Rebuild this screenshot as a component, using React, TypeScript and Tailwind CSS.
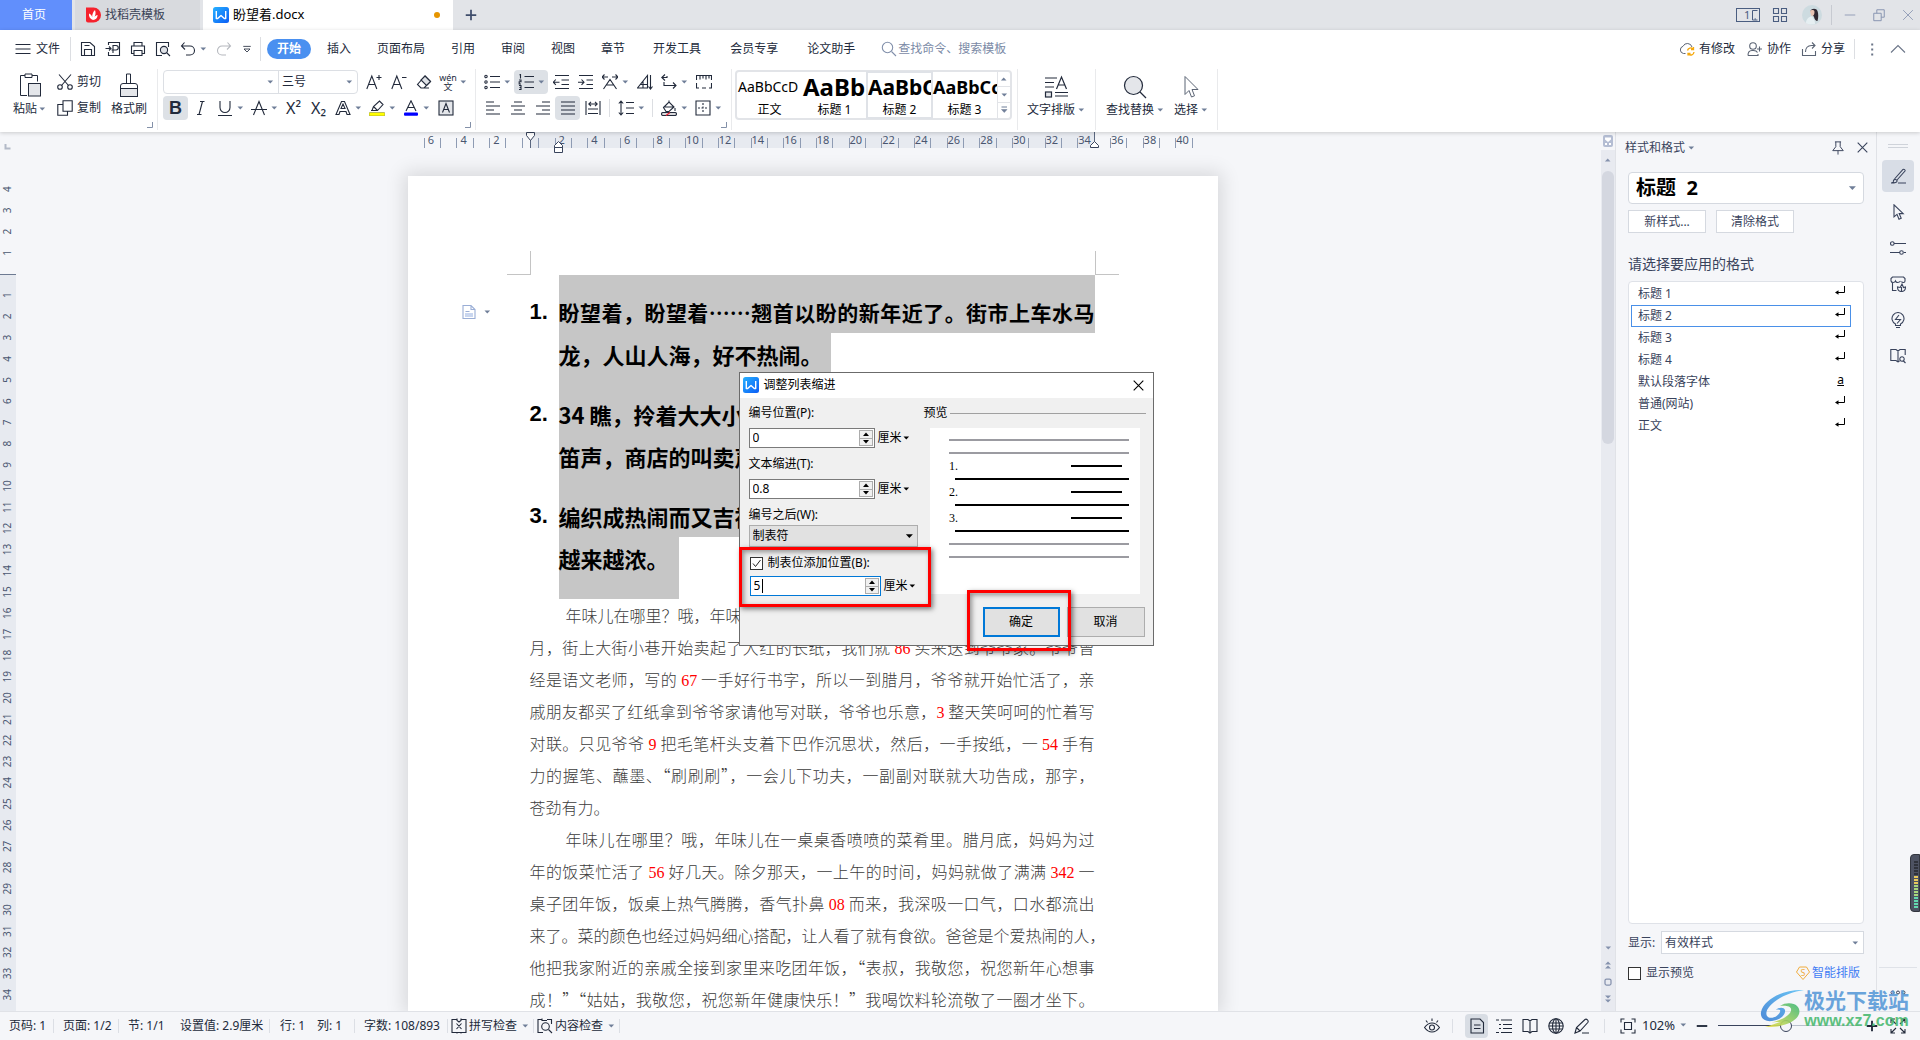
import type { ReactNode } from 'react';
import clsx from 'clsx';

interface IconProps {
  d?: string;
  className?: string;
  children?: ReactNode;
}

const Icon = ({ d, className = 'w-4 h-4', children }: IconProps) => (
  <svg viewBox="0 0 16 16" fill="none" stroke="currentColor" strokeWidth="1.1" className={clsx('shrink-0', className)} aria-hidden="true">
    {d && <path d={d} />}
    {children}
  </svg>
);

const Caret = ({ className = 'w-2 h-2 text-[#6f7e98]' }: { className?: string }) => (
  <svg viewBox="0 0 8 8" className={clsx('shrink-0', className)} aria-hidden="true">
    <path d="M1.5 2.5h5.6L4.3 5.6z" fill="currentColor" />
  </svg>
);

const WpsLogo = ({ className }: { className?: string }) => (
  <svg viewBox="0 0 16 16" className={clsx('shrink-0', className)} aria-hidden="true">
    <defs>
      <linearGradient id="wps" x1="0" y1="0" x2="1" y2="1">
        <stop offset="0" stopColor="#27b1ff" />
        <stop offset="1" stopColor="#0a5cf5" />
      </linearGradient>
    </defs>
    <rect width="16" height="16" rx="2.5" fill="url(#wps)" />
    <path d="M3.3 4v7.5h1.4L8 8.4l3.3 3.1h1.4V4" fill="none" stroke="#fff" strokeWidth="1.4" strokeLinejoin="round" />
  </svg>
);

const Tool = ({ label, active, children }: { label: string; active?: boolean; children: ReactNode }) => (
  <button type="button" aria-label={label} className={clsx('w-[25px] h-6 flex items-center justify-center rounded-sm', active && 'bg-[#dde1e6]')}>
    {children}
  </button>
);

const SplitTool = ({ label, active, children }: { label: string; active?: boolean; children: ReactNode }) => (
  <button type="button" aria-label={label} className={clsx('w-[34px] h-6 pl-1 flex items-center gap-[3px] rounded-sm', active && 'bg-[#dde1e6]')}>
    {children}
    <Caret />
  </button>
);

const GroupLine = () => <div className="w-px h-[61px] bg-[#e9eaec]" />;

const Corner = () => (
  <svg viewBox="0 0 6 6" className="w-[6px] h-[6px] absolute right-1 bottom-1 text-[#8390a8]" fill="none" stroke="currentColor">
    <path d="M5.5 0v5.5H0" />
  </svg>
);

const menusA = ['插入', '页面布局', '引用', '审阅', '视图', '章节'];
const menusB = ['开发工具', '会员专享', '论文助手'];

const styleCards = [
  { name: '正文', sample: 'AaBbCcD', cls: 'text-sm' },
  { name: '标题 1', sample: 'AaBb', cls: 'text-2xl font-bold' },
  { name: '标题 2', sample: 'AaBbC', cls: 'text-[21px] font-bold', active: true },
  { name: '标题 3', sample: 'AaBbCc', cls: 'text-lg font-bold' },
];

const styleList = [
  { name: '标题 1' },
  { name: '标题 2', active: true },
  { name: '标题 3' },
  { name: '标题 4' },
  { name: '默认段落字体', char: true },
  { name: '普通(网站)' },
  { name: '正文' },
];

const paragraphs = [
  [
    '年味儿在哪里？哦，年味',
    '月，街上大街小巷开始卖起了大红的长纸，我们就 86 买来送到爷爷家。爷爷曾',
    '经是语文老师，写的 67 一手好行书字，所以一到腊月，爷爷就开始忙活了，亲',
    '戚朋友都买了红纸拿到爷爷家请他写对联，爷爷也乐意，3 整天笑呵呵的忙着写',
    '对联。只见爷爷 9 把毛笔杆头支着下巴作沉思状，然后，一手按纸，一 54 手有',
    '力的握笔、蘸墨、“刷刷刷”，一会儿下功夫，一副副对联就大功告成，那字，',
    '苍劲有力。',
  ],
  [
    '年味儿在哪里？哦，年味儿在一桌桌香喷喷的菜肴里。腊月底，妈妈为过',
    '年的饭菜忙活了 56 好几天。除夕那天，一上午的时间，妈妈就做了满满 342 一',
    '桌子团年饭，饭桌上热气腾腾，香气扑鼻 08 而来，我深吸一口气，口水都流出',
    '来了。菜的颜色也经过妈妈细心搭配，让人看了就有食欲。爸爸是个爱热闹的人，',
    '他把我家附近的亲戚全接到家里来吃团年饭，“表叔，我敬您，祝您新年心想事',
    '成！”“姑姑，我敬您，祝您新年健康快乐！”我喝饮料轮流敬了一圈才坐下。',
  ],
];

const markNumbers = (line: string) =>
  line.split(/(\d+)/).map((part, i) =>
    i % 2 ? (
      <span key={i} className="text-[#f00] leading-none font-normal font-['Liberation_Serif',serif]">
        {part}
      </span>
    ) : (
      part
    ),
  );

function TabBar() {
  return (
    <header className="h-[30px] flex bg-[#e2e4e8] text-xs text-[#3a4256]">
      <button type="button" className="w-[72px] pr-1 bg-[#618ffc] text-white">首页</button>
      <button type="button" className="ml-[3px] w-[125px] pl-[10px] flex items-center gap-1 bg-[#d8dade]">
        <svg viewBox="0 0 16 16" className="w-4 h-4">
          <path d="M1 .5h7.5a7.5 7.5 0 0 1 0 15H3a2 2 0 0 1-2-2z" fill="#f5222d" />
          <path d="M8 13C5 12 3.6 9.6 4 6.6 6 7.6 7 9 7.2 10.5 7 7.5 8 5 10 3c1 3 .6 5-.6 7 .8-1 1.8-1.7 3.2-2C12.5 11 11 12.8 8 13z" fill="#fff" />
        </svg>
        找稻壳模板
      </button>
      <button type="button" className="ml-[3px] w-[250px] pl-[10px] flex items-center gap-1 bg-white text-[13px] text-black">
        <WpsLogo className="w-4 h-4" />
        盼望着.docx
        <span className="ml-auto mr-[13px] w-[6px] h-[6px] rounded-full bg-[#e69500]" />
      </button>
      <button type="button" aria-label="新建标签" className="w-9 flex items-center justify-center text-[#3f4d6b]">
        <Icon className="w-[14px] h-[14px]"><path d="M8 2v12M2 8h12" strokeWidth="2" /></Icon>
      </button>
      <div className="ml-auto flex items-center text-[#4a5d80]">
        <button type="button" aria-label="窗口排列" className="mr-3">
          <svg viewBox="0 0 24 14" className="w-6 h-[14px]" fill="none" stroke="currentColor">
            <rect x=".5" y=".5" width="23" height="13" />
            <path d="M21.5 2.500h-5v9.500h5M18.500 11h1.500" />
            <text x="8" y="11" fontSize="11" fill="currentColor" stroke="none">1</text>
          </svg>
        </button>
        <button type="button" aria-label="应用" className="mr-[14px]">
          <Icon d="M1.500 1.500h5v5h-5zM9.500 1.500h5v5h-5zM1.500 9.500h5v5h-5zM9.500 9.500h5v5h-5z" />
        </button>
        <button type="button" aria-label="账户" className="mr-[9px]">
          <svg viewBox="0 0 20 20" className="w-5 h-5">
            <circle cx="10" cy="10" r="10" fill="#cddbe0" />
            <path d="M8.500 6c1-3 6-3 7 0 1 3 1 6 0 10-2 0-3-2-3.500-4z" fill="#2f2730" />
            <path d="M8 6.500c1-2 4.500-2 4.500.5s-1 4-3 4z" fill="#e8c3b3" />
            <path d="M4 18c0-4 3-6.500 6-6.500 2 2 3 5 3 7.500-4 1-7 .5-9-1z" fill="#e6eff2" />
          </svg>
        </button>
        <span className="w-px h-5 mr-3 bg-[#c7cad1]" />
        <div className="flex items-center gap-4 pr-[6px] text-[#8593b0]">
          <button type="button" aria-label="最小化"><Icon className="w-3 h-3" d="M1 8h14" /></button>
          <button type="button" aria-label="还原"><Icon className="w-[14px] h-[14px]" d="M2 6h8.500v8.500H2zM5.500 6V2h8.500v8.500h-3.500" /></button>
          <button type="button" aria-label="关闭"><Icon className="w-3 h-3" d="M1.500 1.500l13 13M14.500 1.500l-13 13" /></button>
        </div>
      </div>
    </header>
  );
}

function MenuRow() {
  return (
    <nav className="h-9 pt-[2px] flex items-center text-xs text-[#222a3b]">
      <button type="button" className="ml-[15px] flex items-center gap-[5px]">
        <Icon d="M.5 3.500h15M.5 8h15M.5 12.500h15" />
        文件
      </button>
      <span className="ml-[10px] mr-[9px] w-px h-6 bg-[#dcdee2]" />
      <div className="flex items-center gap-[9px]">
        <button type="button" aria-label="保存"><Icon d="M1.500 1.500h8.500l4.500 4v9h-13zM4.500 14.500v-6h7v6M4.500 4.500h5" /></button>
        <button type="button" aria-label="输出为PDF"><Icon d="M3.500 4V1.500h11v13h-11V11M.5 7.500h5M4 5.500l2 2-2 2M8 12V4.500h3a2 2 0 0 1 0 4.500H6.500" /></button>
        <button type="button" aria-label="打印"><Icon d="M4 5V1.500h8V5M4 12.500H1.500V5h13v7.500H12M4 9.500h8v5H4z" /></button>
        <button type="button" aria-label="打印预览">
          <Icon d="M13.500 6V1.500h-12v13H7M11.500 11.500l3.500 3.500"><circle cx="9" cy="9" r="3.600" fill="#dfe2e7" /></Icon>
        </button>
        <button type="button" aria-label="撤销" className="flex items-center gap-[3px]">
          <Icon d="M4.500 1.500L1.500 5l3.500 3.500M2 5h8a4.500 4.500 0 0 1 0 9H6" />
          <Caret />
        </button>
        <button type="button" aria-label="恢复" className="text-[#b5b8be]"><Icon d="M11.500 1.500l3 3.500-3.500 3.500M14 5H6a4.500 4.500 0 0 0 0 9h4" /></button>
        <button type="button" aria-label="自定义快速访问"><Icon className="w-3 h-3" d="M3 4.500h10M4 8l4 4 4-4z" /></button>
      </div>
      <span className="ml-[7px] mr-[6px] w-px h-6 bg-[#dcdee2]" />
      <button type="button" className="w-11 h-5 rounded-full bg-[#4a90f0] text-white font-bold">开始</button>
      <div className="ml-4 flex gap-[26px]">
        {menusA.map((m) => <button key={m} type="button">{m}</button>)}
      </div>
      <div className="ml-7 flex gap-[29px]">
        {menusB.map((m) => <button key={m} type="button">{m}</button>)}
      </div>
      <label className="ml-[26px] flex items-center gap-px text-[#8290ab]">
        <Icon d="M10.500 10.500l4.500 4.500"><circle cx="6.500" cy="6.500" r="5.200" /></Icon>
        <input aria-label="查找命令" placeholder="查找命令、搜索模板" className="w-32 outline-none placeholder:text-[#7b8aa6]" />
      </label>
      <div className="ml-auto pr-[14px] flex items-center">
        <button type="button" className="flex items-center gap-1">
          <svg viewBox="0 0 16 16" className="w-4 h-4" fill="none">
            <path d="M6.500 12.500H4.500A3.700 3.700 0 0 1 4 5.300 4.800 4.800 0 0 1 13 6" stroke="#5b6474" />
            <path d="M8.500 9.500a3.200 3.200 0 0 1 5.500-1.500M15 11a3.200 3.200 0 0 1-5.500 2M14.500 6v2.500H12M9 14.500V12.500h2.500" stroke="#f5a80c" strokeWidth="1.300" />
          </svg>
          有修改
        </button>
        <button type="button" className="ml-3 flex items-center gap-1">
          <Icon className="w-4 h-4 text-[#5b6474]" d="M1 14.500c0-3 1-5 4-5h1.500c2.500 0 3.500 1 4 2M1 14.500h10V13M12.500 5.500v5M10 8h5"><circle cx="6" cy="5" r="3.300" /></Icon>
          协作
        </button>
        <button type="button" className="ml-[10px] flex items-center gap-1">
          <Icon className="w-4 h-4 text-[#5b6474]" d="M1.500 8v6.500h13V10M4.500 11c0-4 2-6.500 6-6.500h3M11 1.500l3 3-3 3" />
          分享
        </button>
        <span className="ml-[9px] w-px h-5 bg-[#dcdee2]" />
        <button type="button" aria-label="更多" className="ml-[9px] text-[#6b7588]">
          <Icon><path d="M7.200 2.500h2v2h-2zM7.200 7.500h2v2h-2zM7.200 12.500h2v2h-2z" fill="currentColor" stroke="none" /></Icon>
        </button>
        <button type="button" aria-label="收起功能区" className="ml-[10px] text-[#6b7588]"><Icon d="M1 11.500l7-7 7 7" /></button>
      </div>
    </nav>
  );
}

function FontGroup() {
  return (
    <section className="relative w-[317px] h-[66px] pl-[5px] pt-1">
      <div className="flex items-center">
        <div className="w-[195px] h-6 mr-[3px] flex border border-[#dcdfe4] rounded-sm">
          <label className="relative w-[115px] flex items-center border-r border-[#dcdfe4]">
            <select aria-label="字体" className="w-full pl-1 appearance-none outline-none"><option></option></select>
            <span className="absolute right-1 flex"><Caret /></span>
          </label>
          <label className="relative flex-1 flex items-center">
            <select aria-label="字号" className="w-full pl-[3px] appearance-none outline-none"><option>三号</option></select>
            <span className="absolute right-1 flex"><Caret /></span>
          </label>
        </div>
        <Tool label="增大字号"><Icon d="M.8 15L5.800 2l5 13M2.500 10.500h6.600M13 1v5M10.500 3.500h5" /></Tool>
        <Tool label="减小字号"><Icon d="M.8 15L5.800 2l5 13M2.500 10.500h6.600M11 3.500h4.500" /></Tool>
        <Tool label="清除格式">
          <Icon d="M9 2l5.500 5.500-6.500 6.500H5l-3.500-3.500zM5 14h8"><path d="M9 2l5.500 5.500-4 4L5 6z" fill="#dfe2e7" /></Icon>
        </Tool>
        <SplitTool label="拼音指南">
          <span className="w-4 flex flex-col items-center text-[9px] leading-[9px]"><span>wén</span><span>文</span></span>
        </SplitTool>
      </div>
      <div className="mt-[2px] flex items-center">
        <Tool label="加粗" active><span className="text-lg font-bold font-['Liberation_Sans',sans-serif]">B</span></Tool>
        <Tool label="倾斜"><Icon d="M7 1.500h4.500M4 14.500h4.500M9.500 1.500l-3.500 13" /></Tool>
        <SplitTool label="下划线"><Icon d="M3 1v6.500a5 5 0 0 0 10 0V1M1 15.500h14" /></SplitTool>
        <SplitTool label="删除线"><Icon d="M2.500 15L8 1.500 13.500 15M0 9.500h16" /></SplitTool>
        <Tool label="上标"><span className="text-base leading-4">X²</span></Tool>
        <Tool label="下标"><span className="text-base leading-4">X₂</span></Tool>
        <SplitTool label="文字效果"><Icon d="M1 14.500L6.500 1.500h3l5.500 13h-3l-1-3H5l-1 3zM6 8.500h4L8 4z" /></SplitTool>
        <SplitTool label="突出显示">
          <Icon d="M3 10.500l1.500-4L10.500 1l3.500 3.500-5.500 6zM5 7l3.500 3.500M2 10.500h5"><rect x="0" y="12.500" width="16" height="3.500" rx="1" fill="#ff0" stroke="#8b8b45" strokeWidth=".6" /></Icon>
        </SplitTool>
        <SplitTool label="字体颜色">
          <Icon d="M3 11L8 .8 13 11M5 7.500h6"><rect x="1" y="12.500" width="14" height="3.200" rx="1" fill="#00f" stroke="none" /></Icon>
        </SplitTool>
        <Tool label="字符底纹"><Icon><rect x="1" y="1" width="14" height="14" fill="#e4e6ea" /><path d="M4.500 12.500L8 3.500l3.500 9M5.500 9.500h5" /></Icon></Tool>
      </div>
      <Corner />
    </section>
  );
}

function ParagraphGroup() {
  return (
    <section className="relative w-[255px] h-[66px] pl-1 pt-1">
      <div className="flex items-center">
        <SplitTool label="项目符号">
          <Icon d="M6 2.500h10M6 8h10M6 13.500h10"><circle cx="2" cy="2.500" r="1.200" /><circle cx="2" cy="8" r="1.200" /><circle cx="2" cy="13.500" r="1.200" /></Icon>
        </SplitTool>
        <SplitTool label="编号" active>
          <Icon d="M6.500 2.500h9.500M6.500 8h9.500M6.500 13.500h9.500M1.500 1l1-.5v4M1 6h2v1.800H1.200V10H3M1 11.500h2v4H1M1.500 13.500H3" />
        </SplitTool>
        <Tool label="减少缩进"><Icon d="M2 1.500h14M8.500 6h7.500M8.500 10.500h7.500M2 14.500h14M0 8.200h6.500M2.800 5.500L.3 8.200l2.500 2.700" /></Tool>
        <Tool label="增加缩进"><Icon d="M1 1.500h14M8.500 6H15M8.500 10.500H15M1 14.500h14M0 8.200h6M3.500 5.500L6 8.200l-2.500 2.700" /></Tool>
        <SplitTool label="中文版式"><Icon d="M1.500 15L8 5.500 14.500 15M4.500 11h7M0 3h6M2.500.5L0 3l2.500 2.500M10 3h6M13.500.5L16 3l-2.500 2.500" /></SplitTool>
        <Tool label="文字方向"><Icon d="M.5 14h10V1.500zM6 14V7M3.500 10.500h7M13.500 1v14M11.500 12.500l2 2.500 2-2.500" /></Tool>
        <SplitTool label="换行符"><Icon d="M4 .5L.8 3.500 4 6.500M.8 3.500H6V2M6.500 11.500H15M12 8.500l3 3-3 3M3 8v3.500h5" /></SplitTool>
        <Tool label="标尺"><Icon d="M.5 6V1.500h15V6M4 1.500v4M7 1.500v3M10 1.500v4M13 1.500v3M.5 9v5H3M15.500 9v5H13M6 14h4" /></Tool>
      </div>
      <div className="mt-[2px] flex items-center">
        <Tool label="左对齐"><Icon d="M1 2h8M1 6h14M1 10h8M1 14h14" /></Tool>
        <Tool label="居中"><Icon d="M4 2h8M1 6h14M4 10h8M1 14h14" /></Tool>
        <Tool label="右对齐"><Icon d="M7 2h8M1 6h14M7 10h8M1 14h14" /></Tool>
        <Tool label="两端对齐" active><Icon d="M1 2h14M1 6h14M1 10h14M1 14h14" /></Tool>
        <Tool label="分散对齐"><Icon d="M1 1v14M15 1v14M3 9h10M3 13.500h10M4 4h8M6 1.800L3.800 4 6 6.200M10 1.800L12.200 4 10 6.200" /></Tool>
        <span className="mx-1 w-px h-[18px] bg-[#dcdee2]" />
        <SplitTool label="行距"><Icon d="M3 1v14M.8 3.500L3 1l2.200 2.500M.8 12.500L3 15l2.200-2.500M8 2.500h8M8 8h8M8 13.500h8" /></SplitTool>
        <span className="mx-1 w-px h-[18px] bg-[#dcdee2]" />
        <SplitTool label="底纹颜色">
          <Icon d="M2.500 7.500L8 2l5 5-5 4.500H5zM2.500 7H13M8 2V.5M14 8v3"><rect x=".5" y="12.500" width="15" height="3" rx="1.500" fill="#d9d9dc" /><path d="M5 15.500l4-3" stroke="#e23" /></Icon>
        </SplitTool>
        <SplitTool label="边框"><Icon d="M1 1h14v14H1z"><path d="M8 3v10M3 8h10" strokeDasharray="2 1.500" /></Icon></SplitTool>
      </div>
      <Corner />
    </section>
  );
}

function Ribbon() {
  return (
    <div className="h-[66px] flex items-center text-xs text-[#222a3b] leading-4">
      <section className="relative h-[66px] w-[157px] flex">
        <button type="button" className="ml-[13px] h-[60px] pt-[7px] flex flex-col items-center gap-1">
          <svg viewBox="0 0 22 24" className="w-[22px] h-6" fill="none" stroke="currentColor">
            <path d="M8 22.500H1.500v-20H6M13 2.500h5.500v6M6 1h7v3.500H6z" />
            <rect x="9.500" y="10.500" width="12" height="12.500" fill="#e4e6ea" />
          </svg>
          <span className="flex items-center gap-[1px]">粘贴<Caret /></span>
        </button>
        <div className="ml-[11px] pt-[8px] flex flex-col gap-[10px]">
          <button type="button" className="flex items-center gap-1">
            <Icon d="M2 .5l9.500 11M14 .5L4.500 11.500"><circle cx="3" cy="13" r="2.300" /><circle cx="13" cy="13" r="2.300" /></Icon>
            剪切
          </button>
          <button type="button" className="flex items-center gap-1">
            <Icon d="M6 .8h9.200v10.500H6zM6 4.500H.8v10.700h9.700v-4" />
            复制
          </button>
        </div>
        <button type="button" className="ml-[10px] h-[60px] pt-[7px] flex flex-col items-center gap-1">
          <svg viewBox="0 0 20 24" className="w-5 h-6" fill="none" stroke="currentColor">
            <path d="M7.500 10.500V1h4v9.500M1.500 15.500v-2.500a2.500 2.500 0 0 1 2.500-2.500h12a2.500 2.500 0 0 1 2.500 2.500v2.500" />
            <rect x="1.500" y="15.500" width="17" height="8" fill="#e4e6ea" />
          </svg>
          格式刷
        </button>
        <Corner />
      </section>
      <GroupLine />
      <FontGroup />
      <GroupLine />
      <ParagraphGroup />
      <GroupLine />
      <div className="ml-[3px] -mt-[9px] w-[277px] h-[50px] flex border-2 border-[#e2e4e8] rounded-sm">
        {styleCards.map((s) => (
          <button
            key={s.name}
            type="button"
            className={clsx('w-[65px] overflow-hidden flex flex-col text-black', s.active && 'outline-2 -outline-offset-1 outline-[#dfe2e7]')}
          >
            <span className={clsx('w-full h-[31px] pl-px flex items-center whitespace-nowrap', s.cls)}>{s.sample}</span>
            <span className="w-full text-center leading-[14px]">{s.name}</span>
          </button>
        ))}
        <div className="flex-1 flex flex-col border-l border-[#e2e4e8]">
          <button type="button" aria-label="上一行" className="flex-1 flex items-center justify-center"><span className="rotate-180"><Caret /></span></button>
          <button type="button" aria-label="下一行" className="flex-1 flex items-center justify-center border-y border-[#e2e4e8]"><Caret /></button>
          <button type="button" aria-label="更多样式" className="flex-1 flex items-center justify-center">
            <Icon className="w-2 h-2 text-[#6f7e98]"><path d="M3 2h11" strokeWidth="2" /><path d="M3 7h11l-5.500 6z" fill="currentColor" /></Icon>
          </button>
        </div>
      </div>
      <span className="w-[5px]" />
      <GroupLine />
      <button type="button" className="ml-[9px] -mt-[5px] w-[58px] flex flex-col items-center gap-[3px]">
        <svg viewBox="0 0 24 24" className="w-6 h-6" fill="none" stroke="currentColor" strokeWidth="1.200">
          <path d="M1 3h12M1 7.500h9M1 12h9M11 21h13M11 17.500h13M12.500 14l5-12 5 12M14.500 10h6" />
          <rect x="1.500" y="17" width="6" height="5" fill="#e4e6ea" />
        </svg>
        <span className="flex items-center gap-[2px]">文字排版<Caret /></span>
      </button>
      <span className="ml-[10px]" />
      <GroupLine />
      <button type="button" className="ml-[10px] -mt-[5px] w-[58px] flex flex-col items-center gap-[3px]">
        <svg viewBox="0 0 24 24" className="w-6 h-6" fill="none" stroke="currentColor" strokeWidth="1.200">
          <circle cx="10.500" cy="10.500" r="9" fill="#e4e6ea" />
          <path d="M17 17l6 6" />
        </svg>
        <span className="flex items-center gap-[2px]">查找替换<Caret /></span>
      </button>
      <button type="button" className="ml-[10px] -mt-[5px] w-[34px] flex flex-col items-center gap-[3px]">
        <svg viewBox="0 0 24 24" className="w-6 h-6" fill="none" stroke="#5b6474">
          <path d="M6 1.500v18l4-4 2.500 6.500 3-1.200-2.500-6.300h6z" />
        </svg>
        <span className="flex items-center gap-[2px]">选择<Caret /></span>
      </button>
      <span className="ml-[9px]" />
      <GroupLine />
    </div>
  );
}

const CHAR = 16.34;
const ROW = 21.2;

function HorizontalRuler() {
  const origin = 122;
  const labels = Array.from({ length: 24 }, (_, i) => i * 2 - 6).filter((n) => n !== 0);
  return (
    <svg className="w-[810px] h-5 overflow-visible" aria-hidden="true">
      <rect x={origin} y="0" width="564" height="16" fill="#e7eaf0" />
      {Array.from({ length: 48 }, (_, i) => (
        <path key={i} d={`M${Math.round(origin + (i - 6.5) * CHAR) + 0.5} 6v10`} stroke="#8e9bb3" />
      ))}
      {labels.map((n) => (
        <text key={n} x={origin + n * CHAR - 1} y="12" fontSize="11" textAnchor="middle" fill="#4a5670">
          {Math.abs(n)}
        </text>
      ))}
      <path d="M122.500 6v10M686.500 0v10" stroke="#5b6880" />
      <g fill="#fff" stroke="#39445c">
        <path d="M118.500.5h8v3l-4 5-4-5z" />
        <path d="M146.500 15.500v-2l4-4 4 4v2zM146.500 15.500h8v5h-8z" />
        <path d="M682.500 15.500v-2l4-4 4 4v2z" />
      </g>
    </svg>
  );
}

function VerticalRuler() {
  const numbers = Array.from({ length: 39 }, (_, i) => i - 4).filter((n) => n !== 0);
  return (
    <svg className="w-4 h-full shrink-0 bg-[#f5f6f9]" aria-hidden="true">
      <path d="M5.500 12v4.500h5" fill="none" stroke="#b3bac8" strokeWidth="2" />
      <rect x="0" y="142" width="16" height="100%" fill="#e7eaf0" />
      <path d="M0 142.500h16" stroke="#6d7a92" />
      {numbers.map((n) => (
        <text key={n} transform={`translate(11 ${142 + n * ROW}) rotate(-90)`} fontSize="10" textAnchor="middle" fill="#4a5670">
          {Math.abs(n)}
        </text>
      ))}
    </svg>
  );
}

function Spin({ id, value, focused }: { id: string; value: string; focused?: boolean }) {
  return (
    <div className="h-5 flex items-center">
      <div className={clsx('relative h-5 flex items-center bg-white border', focused ? 'w-[131px] border-[#0078d7]' : 'w-[126px] border-[#7a7a7a]')}>
        <input id={id} defaultValue={value} aria-label={focused ? '制表位位置' : undefined} className="w-0 flex-1 pl-[3px] outline-none" />
        {focused && <span className="absolute left-[11px] top-[2px] w-px h-[14px] bg-black" />}
        <div className="w-[14px] h-4 mr-px flex flex-col bg-[#f0f0f0] border border-[#acacac]">
          <button type="button" aria-label="增加" className="flex-1 flex items-center justify-center border-b border-[#acacac]">
            <svg viewBox="0 0 6 4" className="w-[6px] h-1"><path d="M0 4l3-3.500L6 4z" /></svg>
          </button>
          <button type="button" aria-label="减少" className="flex-1 flex items-center justify-center">
            <svg viewBox="0 0 6 4" className="w-[6px] h-1"><path d="M0 0l3 3.500L6 0z" /></svg>
          </button>
        </div>
      </div>
      <button type="button" className="ml-[3px] flex items-center">厘米<Caret className="w-2 h-2 text-black" /></button>
    </div>
  );
}

function IndentDialog() {
  return (
    <div role="dialog" aria-labelledby="dlg-title" className="absolute left-[331px] top-[196px] w-[415px] h-[274px] flex flex-col bg-[#f0f0f0] border border-[#6b6b6b] text-xs text-black">
      <div className="h-[25px] pb-px pl-[3px] pr-[9px] flex items-center bg-white">
        <WpsLogo className="w-4 h-4" />
        <h2 id="dlg-title" className="ml-[5px]">调整列表缩进</h2>
        <button type="button" aria-label="关闭" className="ml-auto"><Icon className="w-[11px] h-[11px]"><path d="M1 1l14 14M15 1L1 15" strokeWidth="1.600" /></Icon></button>
      </div>
      <div className="pl-[9px] pr-[7px] pt-[5px] flex justify-between">
        <div className="w-[170px]">
          <label htmlFor="num-pos" className="h-5 mb-[5px] flex items-center">编号位置(P):</label>
          <Spin id="num-pos" value="0" />
          <label htmlFor="text-indent" className="h-5 mt-[6px] mb-[5px] flex items-center">文本缩进(T):</label>
          <Spin id="text-indent" value="0.8" />
          <label htmlFor="after-num" className="h-5 mt-[6px] flex items-center">编号之后(W):</label>
          <div className="relative w-[169px] flex items-center">
            <select id="after-num" className="w-full h-[22px] pl-[3px] appearance-none bg-[#e1e1e1] border border-[#adadad]"><option>制表符</option></select>
            <span className="absolute right-[4px]"><Caret className="w-[10px] h-[10px]" /></span>
          </div>
          <div className="h-5 ml-px mt-[6px] mb-[3px] flex items-center gap-[5px]">
            <span className="relative w-[13px] h-[13px] flex">
              <input id="tab-pos" type="checkbox" defaultChecked className="w-[13px] h-[13px] appearance-none bg-white border border-[#333]" />
              <svg viewBox="0 0 13 13" className="absolute inset-0 pointer-events-none" fill="none" stroke="#222"><path d="M3 6.500l2.500 3 5-6.500" /></svg>
            </span>
            <label htmlFor="tab-pos">制表位添加位置(B):</label>
          </div>
          <div className="ml-px">
            <Spin id="tab-value" value="5" focused />
          </div>
        </div>
        <div className="w-[222px]">
          <div className="h-5 mb-[5px] flex items-center gap-[2px]">预览<span className="flex-1 h-px bg-[#a0a0a0]" /></div>
          <svg viewBox="0 0 210 166" className="ml-[6px] w-[210px] h-[166px] bg-white font-['Liberation_Serif',serif]" fill="none" strokeWidth="2">
            <path d="M19 12h180M19 25h180M19 116h180M19 129h180" stroke="#9b9ba1" />
            <path d="M25 51h174M25 77h174M25 103h174M141 38h51M141 64h51M141 90h51" stroke="#000" />
            <g fill="#000" fontSize="12">
              <text x="19" y="42">1.</text>
              <text x="19" y="68">2.</text>
              <text x="19" y="94">3.</text>
            </g>
          </svg>
        </div>
      </div>
      <div className="mt-auto pb-2 pr-2 flex justify-end gap-[7px]">
        <button type="button" className="w-[77px] h-[30px] bg-[#e1e1e1] border-2 border-[#0078d7]">确定</button>
        <button type="button" className="w-[78px] h-[30px] bg-[#e1e1e1] border border-[#adadad]">取消</button>
      </div>
      <div className="absolute -left-px top-[174px] w-[192px] h-[60px] border-3 border-[#f00] shadow-[2px_2px_5px_rgba(0,0,0,0.5),inset_2px_2px_5px_rgba(0,0,0,0.4)] pointer-events-none" />
      <div className="absolute left-[227px] top-[217px] w-[104px] h-[61px] border-3 border-[#f00] shadow-[2px_2px_5px_rgba(0,0,0,0.5),inset_2px_2px_5px_rgba(0,0,0,0.4)] pointer-events-none" />
    </div>
  );
}

function Heading({ no, first, second, justify, last }: { no: string; first: string; second: string; justify?: boolean; last?: boolean }) {
  return (
    <li className="flex">
      <span className="w-[29px] font-['Liberation_Sans',sans-serif]">{no}</span>
      <div className="flex-1 whitespace-nowrap">
        <p className={clsx('bg-[#c6c6c6]', justify && 'text-[21px] text-justify [text-align-last:justify]')}>{first}</p>
        <p className={clsx('w-fit bg-[#c6c6c6]', last ? 'pr-[10px] pb-5' : 'pr-2 pb-[18px]')}>{second}</p>
      </div>
    </li>
  );
}

function Page() {
  return (
    <div className="relative w-[810px] shrink-0 pt-[75px] px-[99px] bg-white shadow-[0_0_18px_4px_rgba(0,0,0,0.12)]">
      <div className="h-6 flex justify-between" aria-hidden="true">
        <span className="w-6 h-6 border-r border-b border-[#c4c4c4]" />
        <span className="w-6 h-6 border-l border-b border-[#c4c4c4]" />
      </div>
      <article className="pl-[23px] pr-6 font-['Noto_Sans_CJK_SC',sans-serif]">
        <div className="ml-[29px] h-4 bg-[#c6c6c6]" />
        <ol className="text-[22px] leading-[42px] font-bold text-black">
          <Heading no="1." first="盼望着，盼望着……翘首以盼的新年近了。街市上车水马" second="龙，人山人海，好不热闹。" justify />
          <Heading no="2." first="34 瞧，拎着大大小" second="笛声，商店的叫卖声" />
          <Heading no="3." first="编织成热闹而又吉祥" second="越来越浓。" last />
        </ol>
        {paragraphs.map((lines) => (
          <div key={lines[1]} className="text-base leading-8 font-light text-[#3c3c3c] whitespace-nowrap">
            {lines.map((line, i) => (
              <p key={line} className={clsx(i === 0 && 'pl-9', line.length > 20 && 'text-justify [text-align-last:justify]')}>
                {markNumbers(line)}
              </p>
            ))}
          </div>
        ))}
      </article>
      <button type="button" aria-label="段落选项" className="absolute left-[53px] top-[128px] flex items-center gap-[6px] text-[#9aaed6]">
        <Icon d="M2 1.500h8l4 4v9H2zM10 1.500v4h4M4.500 7.500h4M4.500 10.500h7"><path d="M4 9h8v4H4z" fill="#c9d6ef" stroke="none" /></Icon>
        <Caret />
      </button>
      <IndentDialog />
    </div>
  );
}

function ScrollColumn() {
  return (
    <div className="w-[15px] shrink-0 flex flex-col items-center bg-[#e8eaf0] text-[#8592ad] border-r border-[#e0e2e7]">
      <div className="w-full h-[18px] flex items-center justify-center bg-[#f5f6f9]">
        <svg viewBox="0 0 10 12" className="w-[10px] h-3"><rect width="10" height="12" rx="2" fill="#b4bdd3" /><path d="M2 2.500h6v2l-3 2.500-3-2.500zM2 8h2v2H2zM6 8h2v2H6z" fill="#fff" /></svg>
      </div>
      <button type="button" aria-label="向上" className="h-[21px] rotate-180"><Caret className="w-2 h-2" /></button>
      <div className="w-3 h-[273px] rounded-full bg-[#d4d7e0]" />
      <div className="mt-auto pb-[7px] flex flex-col items-center gap-2">
        <button type="button" aria-label="向下"><Caret className="w-2 h-2" /></button>
        <button type="button" aria-label="上一页"><Icon className="w-2 h-[10px]"><path d="M2 7l6-6 6 6zM2 15l6-6 6 6z" fill="currentColor" stroke="none" /></Icon></button>
        <button type="button" aria-label="选择浏览对象"><Icon className="w-2 h-2"><rect x="2" y="2" width="12" height="12" rx="3" strokeWidth="2.500" /></Icon></button>
        <button type="button" aria-label="下一页"><Icon className="w-2 h-[10px]"><path d="M2 1l6 6 6-6zM2 9l6 6 6-6z" fill="currentColor" stroke="none" /></Icon></button>
      </div>
    </div>
  );
}

function StylePanel() {
  return (
    <aside className="w-[261px] shrink-0 pl-3 pr-3 flex flex-col text-xs text-[#39435c] border-r border-[#e0e2e7]">
      <div className="h-10 pb-[9px] -ml-[3px] -mr-1 flex items-center">
        <button type="button" className="flex items-center gap-[2px]">样式和格式<Caret /></button>
        <button type="button" aria-label="固定" className="ml-auto mr-3"><Icon className="w-[14px] h-[14px]" d="M4.500 1h7M5.500 1v5.500L2 11h12l-3.500-4.500V1M8 11v4.500" /></button>
        <button type="button" aria-label="关闭面板"><Icon className="w-[11px] h-[11px]"><path d="M1 1l14 14M15 1L1 15" strokeWidth="1.600" /></Icon></button>
      </div>
      <div className="relative flex items-center">
        <select aria-label="当前样式" className="w-full h-8 pl-[7px] appearance-none bg-white border border-[#d5d9e0] rounded-sm text-xl font-bold text-black whitespace-pre">
          <option>标题&nbsp; 2</option>
        </select>
        <span className="absolute right-[7px]"><Caret className="w-[10px] h-[10px] text-[#6f7e98]" /></span>
      </div>
      <div className="mt-[6px] flex gap-[10px]">
        <button type="button" className="w-[78px] h-[23px] bg-white border border-[#d5d9e0]">新样式...</button>
        <button type="button" className="w-[78px] h-[23px] bg-white border border-[#d5d9e0]">清除格式</button>
      </div>
      <h3 className="mt-5 mb-[7px] text-sm leading-[21px]">请选择要应用的格式</h3>
      <ul className="flex-1 pt-px pl-[2px] pr-3 bg-white border border-[#dfe2e8] rounded-sm">
        {styleList.map((s) => (
          <li key={s.name} className={clsx('h-[22px] pl-[6px] pr-[5px] flex items-center justify-between border', s.active ? 'border-[#4a90e8]' : 'border-transparent')}>
            {s.name}
            {s.char ? (
              <span className="mr-px mb-1 text-black underline leading-3">a</span>
            ) : (
              <svg viewBox="0 0 10 10" className="w-[10px] h-[10px] mb-[6px]" fill="none" stroke="#000"><path d="M9.500 0v6.500H2" /><path d="M0 6.500l3.500-2.200v4.400z" fill="#000" stroke="none" /></svg>
            )}
          </li>
        ))}
      </ul>
      <div className="mt-[7px] flex items-center">
        <label htmlFor="show-kind" className="w-[33px]">显示:</label>
        <div className="relative flex-1 flex items-center">
          <select id="show-kind" className="w-full h-[23px] pl-[3px] appearance-none bg-white border border-[#d5d9e0]"><option>有效样式</option></select>
          <span className="absolute right-[5px]"><Caret /></span>
        </div>
      </div>
      <div className="mt-[11px] mb-[30px] pr-1 flex items-center">
        <input id="show-preview" type="checkbox" className="w-[13px] h-[13px] appearance-none bg-white border border-[#333]" />
        <label htmlFor="show-preview" className="ml-[5px]">显示预览</label>
        <a href="#smart" className="ml-auto flex items-center gap-[2px] text-[#3f7cf4]">
          <svg viewBox="0 0 14 14" className="w-[14px] h-[14px]" fill="none" stroke="#f0ac3c">
            <path d="M3.500 1h7L13.500 6 7 13.500.5 6z" />
            <text x="7" y="10" fontSize="9" textAnchor="middle" fill="#f0ac3c" stroke="none">S</text>
          </svg>
          智能排版
        </a>
      </div>
    </aside>
  );
}

const sideTools = [
  { name: '样式', d: 'M1 15c2.500 0 2.500-1 2.500-2.500 1-1.800 3-1 3.500 0 .5 2-2 2.500-6 2.500zM4.500 11l8.500-9.500c1-.8 2.500.5 2 1.500L7 12M8 15h8', active: true },
  { name: '选择', d: 'M4 .8v12l3-2.500 2 4.900 2.200-.9-2-4.700h4z' },
  { name: '属性', d: 'M4.500 3.500H16M0 12.500h9.500M14 12.500h2M.5 3.500a1.800 1.800 0 1 0 3.600 0 1.800 1.800 0 1 0-3.600 0M9.700 12.500a1.800 1.800 0 1 0 3.600 0 1.800 1.800 0 1 0-3.600 0' },
  { name: '素材', d: 'M6.500 14.500h-4V6.500M1 5V2.500L2.500 1h11L15 2.500V5c0 2-3 2-3.500.5M1 5c.5 2 3.500 2 4.500 0 .5 2 3.500 2 5 0M7.500 11c0 3 2 4.500 4 4.500s4-1.500 4-4.500l-2 .5-1.500-3.500-1.800 3.500zM11.500 15V11' },
  { name: '灵感', d: 'M5.500 13.500V12A6 6 0 1 1 10.500 12v1.500zM6 15.500h4M9 3L5.500 7.500h5L7 11.500' },
  { name: '文档检索', d: 'M8 3v11M8 14l-2-1.500H.8V1.500H6L8 3l2-1.500h5.200V7M13.500 13l2 2M8 14l1.500-1M9.800 11a2.200 2.200 0 1 0 4.400 0 2.200 2.200 0 1 0-4.400 0' },
];

function SideStrip() {
  return (
    <div className="relative w-[43px] shrink-0 pr-[2px] flex flex-col items-center text-[#39435c]">
      <div className="mt-3 mb-3 w-5 h-1 border-y border-[#cfd3da]" />
      <div className="flex flex-col gap-1">
        {sideTools.map((t) => (
          <button key={t.name} type="button" aria-label={t.name} className={clsx('w-8 h-8 flex items-center justify-center rounded-sm', t.active && 'bg-[#d8dde6]')}>
            <Icon d={t.d} />
          </button>
        ))}
      </div>
      <div className="mt-auto w-[38px] h-px bg-[#dfe2e8]" />
      <button type="button" aria-label="更多工具" className="mt-[21px] mb-4 h-[6px] flex items-center">
        <svg viewBox="0 0 16 5" className="w-4 h-[5px]" fill="none" stroke="currentColor"><circle cx="2.500" cy="2.500" r="1.500" /><circle cx="8" cy="2.500" r="1.500" /><circle cx="13.500" cy="2.500" r="1.500" /></svg>
      </button>
      <div className="absolute right-0 bottom-[99px] w-[10px] h-[58px] pt-[6px] pl-[3px] flex flex-col gap-px rounded-l bg-[#4d5262] border border-[#33363f]" aria-hidden="true">
        {Array.from({ length: 16 }, (_, i) => (
          <span key={i} className={clsx('w-1 h-[2px] shrink-0', i < 5 ? 'bg-[#2f323b]' : i < 8 ? 'bg-[#e8c95c]' : i < 12 ? 'bg-[#a9d67c]' : 'bg-[#63d8b0]')} />
        ))}
      </div>
    </div>
  );
}

const StatusLine = ({ className }: { className?: string }) => <span className={clsx('w-px h-[14px] bg-[#dcdfe5]', className)} />;

function StatusBar() {
  return (
    <footer className="h-[29px] shrink-0 pb-px flex items-center bg-[#f5f6f9] border-t border-[#e0e2e7] text-xs text-[#222a3b]">
      <span className="w-[53px] pl-[9px]">页码: 1</span>
      <StatusLine />
      <span className="w-16 pl-[9px]">页面: 1/2</span>
      <StatusLine />
      <span className="w-[61px] pl-[9px]">节: 1/1</span>
      <span className="w-[89px]">设置值: 2.9厘米</span>
      <StatusLine />
      <span className="w-[47px] pl-[10px]">行: 1</span>
      <span className="w-[37px]">列: 1</span>
      <StatusLine />
      <span className="w-[92px] pl-[9px]">字数: 108/893</span>
      <StatusLine />
      <button type="button" className="w-[85px] pl-[3px] flex items-center gap-[2px]">
        <Icon d="M6 1.500H1v13h5M10 1.500h5v13h-5M6 .5v2l2 1.500 2-1.500v-2M6 15.500v-1h4v1M5.500 5.500l5 5.500M10.500 5.500l-5 5.500" />
        拼写检查
        <Caret className="ml-[2px] w-2 h-2 text-[#6f7e98]" />
      </button>
      <StatusLine />
      <button type="button" className="w-[85px] pl-[3px] flex items-center gap-[2px]">
        <Icon d="M5 1.500H1v13h5M10 1.500h4.500V6M11.500 11.500l3.500 3.500M5 .5v2h5"><circle cx="8.500" cy="8.500" r="3.800" /></Icon>
        内容检查
        <Caret className="ml-[2px] w-2 h-2 text-[#6f7e98]" />
      </button>
      <StatusLine />
      <div className="ml-auto pr-[14px] flex items-center">
        <button type="button" aria-label="护眼模式"><Icon d="M.5 9.500C3 6 5.500 5 8 5s5 1 7.500 4.500C13 13 10.500 14 8 14S3 13 .5 9.500zM8 3V.5M3.500 4.500L2 2.500M12.500 4.500l1.500-2"><circle cx="8" cy="9.500" r="2.500" /></Icon></button>
        <StatusLine className="ml-3 mr-[12px]" />
        <button type="button" aria-label="页面视图" className="w-[23px] h-6 mr-2 flex items-center justify-center rounded-sm bg-[#d8dde4]"><Icon d="M2 1h9l3.500 3.500V15H2zM5 7h6.500M5 10.500h6.500" /></button>
        <div className="flex items-center gap-[10px]">
          <button type="button" aria-label="大纲"><Icon d="M0 2h3M5 2h11M3 6.500h2M7 6.500h9M3 10.500h2M7 10.500h9M0 14.500h3M5 14.500h11" /></button>
          <button type="button" aria-label="阅读版式"><Icon d="M8 3v12M1 1.500h5L8 3l2-1.500h5v12h-5L8 15l-2-1.500H1z" /></button>
          <button type="button" aria-label="Web版式"><Icon d="M8 .8v14.400M1.500 5h13M1.500 11h13M.8 8h14.400"><circle cx="8" cy="8" r="7.200" /><ellipse cx="8" cy="8" rx="3.500" ry="7.200" /></Icon></button>
          <button type="button" aria-label="写作模式"><Icon d="M1 15l1.500-5.500L11 1.500c1.500-1 4 1 3 2.800L6 13zM3 10l3 3M8 15h7" /></button>
        </div>
        <StatusLine className="ml-[14px] mr-[15px]" />
        <button type="button" aria-label="适应窗口"><Icon d="M1 4.500V1h3.500M11.500 1H15v3.500M15 11.500V15h-3.500M4.500 15H1v-3.500M4.500 4.500h7v7h-7z" /></button>
        <button type="button" className="ml-[6px] w-[45px] flex items-center justify-between text-[13px]">102%<Caret /></button>
        <button type="button" aria-label="缩小" className="ml-[9px]"><Icon className="w-3 h-3"><path d="M1 8h14" strokeWidth="2.500" /></Icon></button>
        <div className="relative ml-[10px] w-[141px] h-4 flex items-center">
          <span className="w-[69px] h-px bg-[#39435c]" />
          <span className="flex-1 h-px bg-[#b9c0cc]" />
          <span className="absolute left-[62px] w-3 h-3 rounded-full border border-[#39435c] bg-[#f5f6f9]" />
          <input type="range" aria-label="缩放" min="10" max="200" defaultValue="102" className="absolute inset-0 w-full opacity-0" />
        </div>
        <button type="button" aria-label="放大" className="ml-[7px]"><Icon className="w-3 h-3"><path d="M1 8h14M8 1v14" strokeWidth="2.500" /></Icon></button>
        <button type="button" aria-label="全屏" className="ml-3"><Icon d="M1 5V1h4M11 1h4v4M15 11v4h-4M5 15H1v-4M1 1l5 5M15 1l-5 5M15 15l-5-5M1 15l5-5" /></button>
      </div>
    </footer>
  );
}

function SiteMark() {
  return (
    <div className="absolute right-[11px] bottom-[9px] flex items-start opacity-90 pointer-events-none">
      <svg viewBox="0 0 44 42" className="w-11 h-[42px]">
        <defs>
          <linearGradient id="swirl" x1="0" y1="1" x2="1" y2="0">
            <stop offset="0" stopColor="#3b7fd4" />
            <stop offset="1" stopColor="#5cc0f5" />
          </linearGradient>
          <linearGradient id="tail" x1="0" y1="1" x2="1" y2="0">
            <stop offset="0" stopColor="#f1e34c" />
            <stop offset="1" stopColor="#3cb878" />
          </linearGradient>
        </defs>
        <path d="M44 1C24 0 4 10 1 23c-1 6 4 10 11 9 8-1 14-6 13-11-1-3-6-3-9 0 3-1 5 0 4 2-2 5-10 8-13 4C3 20 18 5 44 1z" fill="url(#swirl)" />
        <path d="M20 17c6-4 14-3 17 0 8 8-4 22-32 21 6-2 10-3 15-5-5 0-8 0-10 1 12-3 22-8 21-14 0-3-6-4-11-3z" fill="url(#tail)" />
      </svg>
      <div className="font-bold text-center">
        <div className="text-[21px] leading-[22px] text-[#5a9bd8]">极光下载站</div>
        <div className="text-base leading-5 text-[#4dbb72] font-['Liberation_Sans',sans-serif]">www.xz7.com</div>
      </div>
    </div>
  );
}

export default function App() {
  return (
    <div lang="zh-CN" className="relative h-screen flex flex-col overflow-hidden bg-white font-['Noto_Sans','Noto_Sans_CJK_SC',sans-serif]">
      <TabBar />
      <div className="relative z-10 bg-white shadow-[0_1px_4px_rgba(0,0,0,0.18)]">
        <MenuRow />
        <Ribbon />
      </div>
      <main className="flex-1 min-h-0 flex bg-[#f5f6f9]">
        <VerticalRuler />
        <div className="flex-1 min-w-0 pl-2 flex flex-col items-center overflow-hidden">
          <HorizontalRuler />
          <div className="flex-1 min-h-0 pt-6 flex">
            <Page />
          </div>
        </div>
        <ScrollColumn />
        <StylePanel />
        <SideStrip />
      </main>
      <StatusBar />
      <SiteMark />
    </div>
  );
}
